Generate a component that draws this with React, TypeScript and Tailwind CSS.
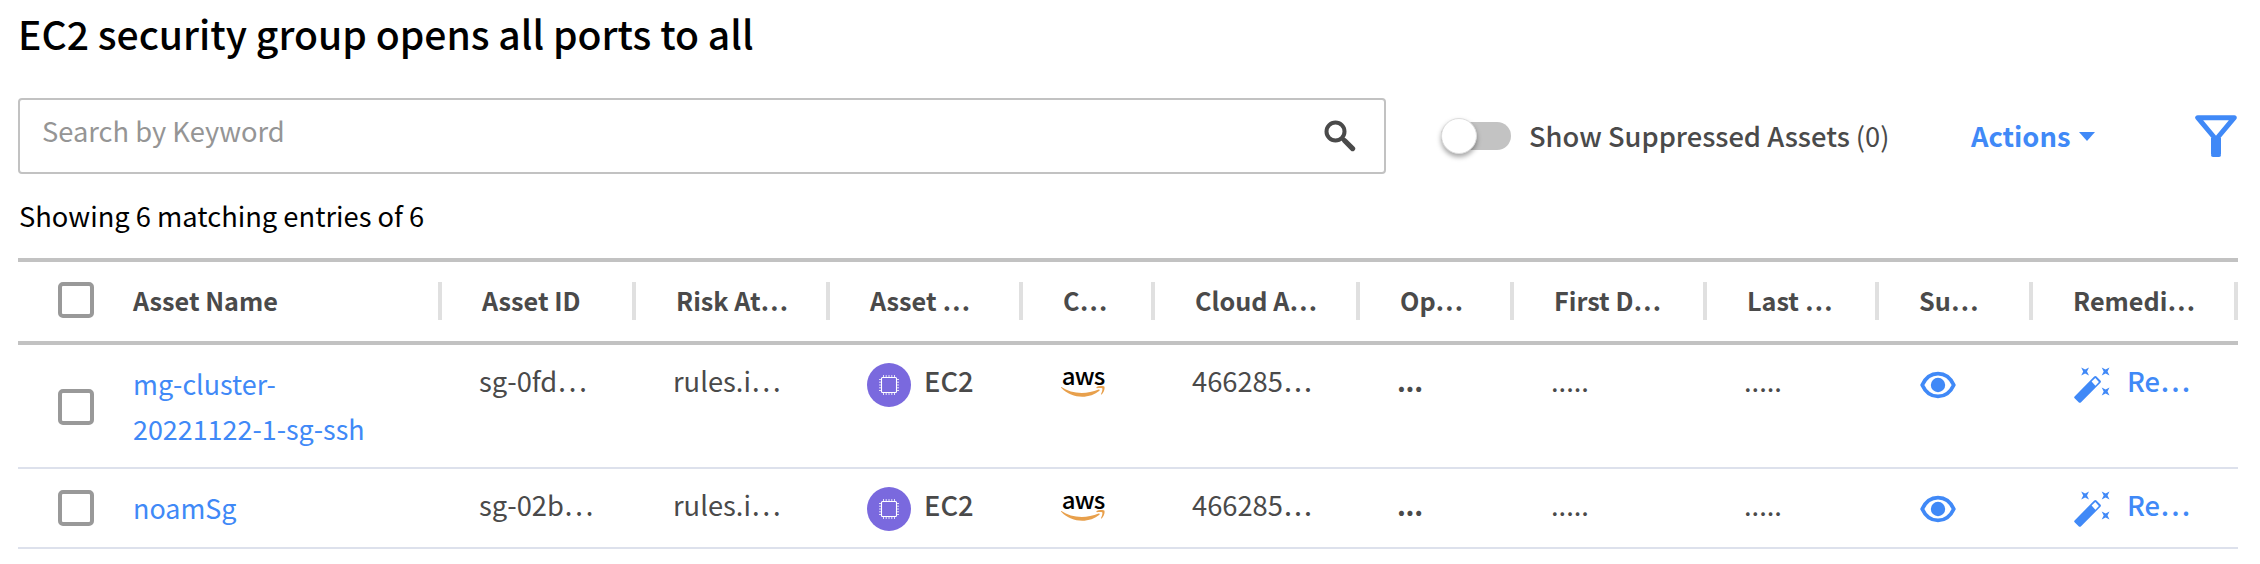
import type { ReactNode } from "react";

const COLUMNS = [
  "Asset ID",
  "Risk At…",
  "Asset …",
  "C…",
  "Cloud A…",
  "Op…",
  "First D…",
  "Last …",
  "Su…",
  "Remedi…",
];

const ROWS = [
  { name: ["mg-cluster-", "20221122-1-sg-ssh"], id: "sg-0fd…", risk: "rules.i…", account: "466285" },
  { name: ["noamSg"], id: "sg-02b…", risk: "rules.i…", account: "466285" },
];

const GRID =
  "grid grid-cols-[115px_309px_194px_194px_193px_132px_205px_154px_193px_172px_154px_205px]";

function Clipped({ text }: { text: string }) {
  if (!text.endsWith("…")) return <>{text}</>;
  return (
    <>
      {text.slice(0, -1)}
      <span className="text-[28px] leading-none">…</span>
    </>
  );
}

function Checkbox() {
  return <span className="block size-9 rounded-[5px] border-4 border-[#999]" />;
}

function SearchIcon() {
  return (
    <svg viewBox="0 0 32 32" className="h-8 w-8" fill="none" stroke="#4a4a4a">
      <circle cx="11.5" cy="11.5" r="9" strokeWidth="4" />
      <path d="M18 18l2.5 2.5" strokeWidth="4" />
      <path d="M21 21l7.6 7.6" strokeWidth="5.2" strokeLinecap="round" />
    </svg>
  );
}

function FunnelIcon() {
  return (
    <svg viewBox="0 0 42 42" className="size-[42px]" fill="none" stroke="#4089f7">
      <path d="M2.700 2.700h36.600L21 24.500z" strokeWidth="5" strokeLinejoin="round" />
      <path d="M21 23v14" strokeWidth="10" />
      <path d="M18 40h6" strokeWidth="4" strokeLinecap="round" />
      <path d="M16 37h10v2H16z" fill="#4089f7" stroke="none" />
    </svg>
  );
}

function ChipIcon() {
  return (
    <svg viewBox="0 0 44 44" className="size-11 shrink-0">
      <circle cx="22" cy="22" r="22" fill="#7a69de" />
      <g fill="none" stroke="#fff">
        <rect x="14.5" y="14.5" width="15" height="15" rx="1" strokeWidth="1.1" />
        <path
          d="M16.5 12v2.5M19.2 12v2.5M22 12v2.5M24.8 12v2.5M27.5 12v2.5M16.5 29.5V32M19.2 29.5V32M22 29.5V32M24.8 29.5V32M27.5 29.5V32M12 16.5h2.5M12 19.2h2.5M12 22h2.5M12 24.8h2.5M12 27.5h2.5M29.5 16.5H32M29.5 19.2H32M29.5 22H32M29.5 24.8H32M29.5 27.5H32"
          strokeWidth="0.8"
        />
      </g>
    </svg>
  );
}

function AwsLogo() {
  return (
    <div className="flex w-11 flex-col items-center pt-[5px]">
      <span className="text-[24px] leading-[23px] font-medium tracking-[-0.9px] text-black">aws</span>
      <svg viewBox="0 0 44 12" className="h-3 w-11" fill="#e8a04c">
        <path d="M0.4 1C10 7.600 24 9.200 37.600 3.600c1-.4 1.600.5.800 1.200C29 13 11 13.500.2 1.800-.2 1.300 0 .8.4 1z" />
        <path d="M35.600.9C38.200-.4 42.600-.2 43.300.6c.8 1.200-.1 5.500-2.700 7.800-.4.3-.8.1-.6-.3.7-1.600 1.800-4.700 1.300-5.500-.5-.7-3.700-.5-5.300-.3-.6.1-.8-.9-.4-1.400z" />
      </svg>
    </div>
  );
}

function EyeIcon() {
  return (
    <svg viewBox="0 0 36 28" className="h-7 w-9">
      <path
        d="M2.200 14C5.500 6.800 11 2.600 18 2.600S30.500 6.800 33.800 14C30.500 21.200 25 25.400 18 25.400S5.500 21.200 2.200 14z"
        fill="none"
        stroke="#4089f7"
        strokeWidth="3.800"
        strokeLinejoin="round"
      />
      <circle cx="18" cy="14" r="7.200" fill="#4089f7" />
    </svg>
  );
}

function WandIcon() {
  return (
    <svg viewBox="0 0 36 36" className="size-9" fill="#4089f7">
      <path
        d="M0.600 29.400 20.200 9.600c.7-.7 1.600-.7 2.300 0l3.900 3.900c.7.7.7 1.600 0 2.300L6.800 35.400c-.6.6-1.300.6-1.900 0L.6 31.200c-.6-.6-.6-1.200 0-1.800zM17.600 14.600l3.800 4.200 3.500-3.700-3.600-4.100z"
        fillRule="evenodd"
      />
      <path d="M7.200.6l3.900 2 3.900-2-2 3.900 2 3.900-3.900-2-3.900 2 2-3.900z" />
      <path d="M27.700.6l3.900 2 3.900-2-2 3.900 2 3.900-3.900-2-3.900 2 2-3.900z" />
      <path d="M27.700 20.600l3.900 2 3.900-2-2 3.900 2 3.900-3.900-2-3.900 2 2-3.900z" />
    </svg>
  );
}

function Cell({ children }: { children: ReactNode }) {
  return <div className="pt-[13px] pl-[37px]">{children}</div>;
}

export default function App() {
  return (
    <main className="h-[564px] w-[2260px] overflow-hidden bg-white pr-[22px] pl-[18px] font-['Noto_Sans_CJK_SC',sans-serif] text-[27.3px] leading-[44px] whitespace-nowrap text-[#4a4a4a]">
      <h1 className="pt-[7px] text-[39.1px] leading-[52px] font-medium text-black">
        EC2 security group opens all ports to all
      </h1>

      <div className="mt-[39px] flex h-[76px] items-center">
        <div className="flex h-[76px] w-[1368px] items-center justify-between rounded border-2 border-[#c2c2c2] pr-7 pl-[22px]">
          <span className="pb-3 text-[#959595]">Search by Keyword</span>
          <SearchIcon />
        </div>
        <div className="ml-[55px] flex h-7 w-[70px] items-center rounded-full bg-[#c3c3c3]">
          <span className="size-9 rounded-full border border-[#ddd] bg-white shadow-[0_3px_5px_rgba(0,0,0,0.35)]" />
        </div>
        <div className="ml-[18px] w-[442px] pb-0.5">
          <span className="font-medium">Show Suppressed Assets</span> (0)
        </div>
        <div className="flex w-[224px] items-center gap-[9px] font-bold text-[#4089f7]">
          <span className="pb-0.5">Actions</span>
          <svg viewBox="0 0 16 9" className="h-[9px] w-4" fill="#4089f7">
            <path d="M0 0h16L8 9z" />
          </svg>
        </div>
        <FunnelIcon />
      </div>

      <p className="mt-[19px] pl-px text-black">Showing 6 matching entries of 6</p>

      <div className="mt-[21px]">
        <div className={`${GRID} h-[87px] border-y-4 border-[#c2c2c2] text-[25.2px] font-bold`}>
          <div className="pt-5 pl-10">
            <Checkbox />
          </div>
          <div className="flex items-start justify-between pt-5">
            <span className="leading-[36px]">Asset Name</span>
            <span className="h-[38px] w-1 bg-[#e0e0e0]" />
          </div>
          {COLUMNS.map((c) => (
            <div key={c} className="flex items-start justify-between pt-5 pl-10">
              <span className="leading-[36px]">{c}</span>
              <span className="h-[38px] w-1 bg-[#e0e0e0]" />
            </div>
          ))}
        </div>

        {ROWS.map((r) => (
          <div key={r.id} className={`${GRID} border-b-2 border-[#dde1ec]`}>
            <div className="flex items-center pt-px pl-10">
              <Checkbox />
            </div>
            <div className="pt-[17px] pb-4 text-[26.9px] leading-[44.5px] text-[#4089f7]">
              {r.name.map((n) => (
                <div key={n}>{n}</div>
              ))}
            </div>
            <Cell>
              <Clipped text={r.id} />
            </Cell>
            <Cell>
              <Clipped text={r.risk} />
            </Cell>
            <Cell>
              <div className="flex gap-[13px] font-medium">
                <div className="pt-[5px]">
                  <ChipIcon />
                </div>
                EC2
              </div>
            </Cell>
            <Cell>
              <div className="pl-px">
                <AwsLogo />
              </div>
            </Cell>
            <Cell>
              {r.account}
              <span className="align-[-9px] text-[30px] leading-none">…</span>
            </Cell>
            <Cell>
              <span className="font-bold tracking-[-0.3px]">...</span>
            </Cell>
            <Cell>.....</Cell>
            <Cell>.....</Cell>
            <Cell>
              <div className="pt-[13px] pl-1">
                <EyeIcon />
              </div>
            </Cell>
            <Cell>
              <div className="flex gap-[17px] pl-1 font-medium text-[#4089f7]">
                <div className="pt-[9px]">
                  <WandIcon />
                </div>
                <span>
                  <Clipped text="Re…" />
                </span>
              </div>
            </Cell>
          </div>
        ))}
      </div>
    </main>
  );
}
